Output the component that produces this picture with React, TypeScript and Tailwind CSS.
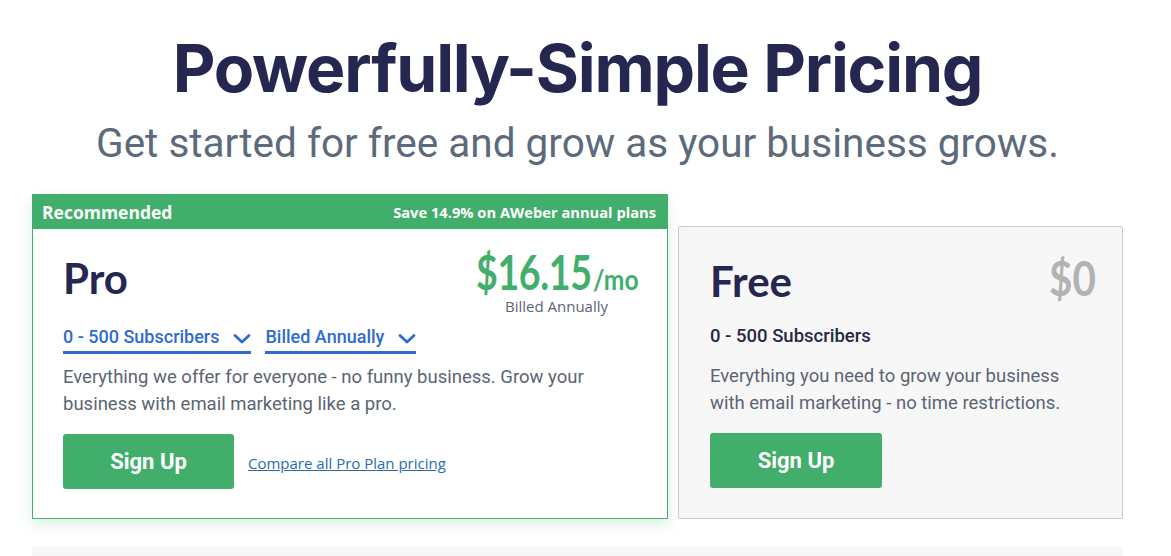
import React from 'react';

const Chevron = () => (
  <svg width="18" height="12" viewBox="0 0 18 12" className="ml-[14px] mt-[4px]">
    <path d="M2 2.5 L9 9 L16 2.5" fill="none" stroke="#2f6bd0" strokeWidth="2.8" strokeLinecap="round" strokeLinejoin="round" />
  </svg>
);

const Dropdown = ({ label }: { label: string }) => (
  <div className="flex items-center border-b-[3px] border-[#2f6bd0] pb-[1px] text-[18px] leading-[26px] font-medium text-[#2f6bd0] [font-family:Roboto,sans-serif]">
    <span>{label}</span>
    <Chevron />
  </div>
);

export default function App() {
  return (
    <div className="min-h-screen bg-white overflow-hidden">
      <div className="w-[1155px]">
        <div className="flex flex-col items-center pt-[28px]">
          <h1 className="text-[66px] leading-[80px] font-bold tracking-[-1.2px] text-[#262750] [font-family:Inter,sans-serif]">
            Powerfully-Simple Pricing
          </h1>
          <p className="mt-[12px] text-[40.5px] leading-[46px] text-[#5b6b7c] [font-family:Roboto,sans-serif]">
            Get started for free and grow as your business grows.
          </p>
        </div>

        <div className="ml-[32px] mt-[28px] w-[1091px]">
          <div className="flex items-end gap-[10px]">
            {/* Pro card */}
            <div className="w-[636px] border border-[#41ae6b] bg-white shadow-[0_6px_14px_rgba(65,174,107,0.18)]">
              <div className="flex h-[34px] items-center justify-between bg-[#41ae6b] pl-[9px] pr-[11px] text-white [font-family:'Open_Sans',sans-serif]">
                <span className="text-[17.5px] font-bold">Recommended</span>
                <span className="text-[14.7px] font-bold">Save 14.9% on AWeber annual plans</span>
              </div>
              <div className="px-[30px] pb-[29px] pt-[20px]">
                <div className="flex items-start justify-between">
                  <h2 className="mt-[4px] text-[42px] leading-[50px] font-bold text-[#262750] [font-family:Lato,sans-serif]">Pro</h2>
                  <div className="flex flex-col items-center">
                    <div className="flex items-baseline font-bold text-[#41ae6b] [font-family:Lato,sans-serif]">
                      <span className="inline-block w-[117px] text-[47px] leading-[46px]">
                        <span className="inline-block origin-left scale-x-[0.8] tracking-[-0.5px]">$16.15</span>
                      </span>
                      <span className="inline-block w-[44px] text-[28px] leading-[30px]">
                        <span className="inline-block origin-left scale-x-[0.88]">/mo</span>
                      </span>
                    </div>
                    <span className="mt-[3px] text-[15px] leading-[16px] text-[#5b6472] [font-family:'Open_Sans',sans-serif]">Billed Annually</span>
                  </div>
                </div>
                <div className="mt-[10px] flex gap-[14px]">
                  <Dropdown label="0 - 500 Subscribers" />
                  <Dropdown label="Billed Annually" />
                </div>
                <p className="mt-[10px] text-[18.5px] leading-[27px] text-[#5b6472] [font-family:Roboto,sans-serif]">
                  Everything we offer for everyone - no funny business. Grow your
                  <br />
                  business with email marketing like a pro.
                </p>
                <div className="mt-[16px] flex items-center">
                  <button className="h-[55px] w-[171px] rounded-[3px] bg-[#41ae6b] text-[22px] font-bold text-white [font-family:Roboto,sans-serif]">
                    Sign Up
                  </button>
                  <a className="ml-[14px] mt-[4px] text-[15px] text-[#2a6bb0] underline [font-family:'Open_Sans',sans-serif]">
                    Compare all Pro Plan pricing
                  </a>
                </div>
              </div>
            </div>

            {/* Free card */}
            <div className="w-[445px] rounded-[2px] border border-[#c6cad3] bg-[#f7f7f8] px-[31px] pb-[30px] pt-[23px]">
              <div className="flex items-start justify-between">
                <h2 className="mt-[6px] text-[42px] leading-[50px] font-bold text-[#262750] [font-family:Lato,sans-serif]">Free</h2>
                <span className="mr-[-3px] inline-block w-[45px] text-[47px] leading-[56px] font-bold text-[#b3b3b3] [font-family:Lato,sans-serif]">
                  <span className="inline-block origin-left scale-x-[0.86]">$0</span>
                </span>
              </div>
              <div className="mt-[16px] text-[18.5px] leading-[28px] font-medium text-[#262a3d] [font-family:Roboto,sans-serif]">
                0 - 500 Subscribers
              </div>
              <p className="mt-[13px] text-[18.5px] leading-[27px] text-[#5b6472] [font-family:Roboto,sans-serif]">
                Everything you need to grow your business
                <br />
                with email marketing - no time restrictions.
              </p>
              <button className="mt-[16px] h-[55px] w-[172px] rounded-[3px] bg-[#41ae6b] text-[22px] font-bold text-white [font-family:Roboto,sans-serif]">
                Sign Up
              </button>
            </div>
          </div>

          <div className="mt-[28px] h-[40px] bg-[#f7f7f7]" />
        </div>
      </div>
    </div>
  );
}
